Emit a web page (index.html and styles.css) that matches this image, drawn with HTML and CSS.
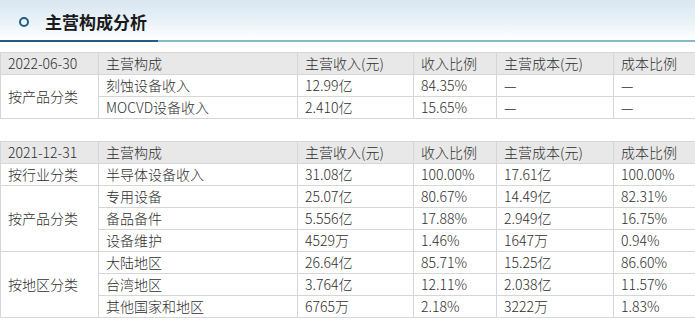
FILE: index.html
```html
<!DOCTYPE html>
<html lang="zh-CN">
<head>
<meta charset="utf-8">
<title>主营构成分析</title>
<link rel="stylesheet" href="styles.css">
</head>
<body>
<div class="page">
  <div class="title-bar">
    <span class="title-dot"></span>
    <h2 class="title">主营构成分析</h2>
  </div>
  <div class="title-line"><span class="line-dark"></span><span class="line-light"></span></div>

  <table class="grid first">
    <colgroup>
      <col class="c1"><col class="c2"><col class="c3"><col class="c4"><col class="c5"><col class="c6">
    </colgroup>
    <tr class="head">
      <td>2022-06-30</td><td>主营构成</td><td>主营收入(元)</td><td>收入比例</td><td>主营成本(元)</td><td>成本比例</td>
    </tr>
    <tr>
      <td rowspan="2">按产品分类</td><td>刻蚀设备收入</td><td>12.99亿</td><td>84.35%</td><td>—</td><td>—</td>
    </tr>
    <tr>
      <td>MOCVD设备收入</td><td>2.410亿</td><td>15.65%</td><td>—</td><td>—</td>
    </tr>
  </table>

  <table class="grid second">
    <colgroup>
      <col class="c1"><col class="c2"><col class="c3"><col class="c4"><col class="c5"><col class="c6">
    </colgroup>
    <tr class="head">
      <td>2021-12-31</td><td>主营构成</td><td>主营收入(元)</td><td>收入比例</td><td>主营成本(元)</td><td>成本比例</td>
    </tr>
    <tr>
      <td>按行业分类</td><td>半导体设备收入</td><td>31.08亿</td><td>100.00%</td><td>17.61亿</td><td>100.00%</td>
    </tr>
    <tr>
      <td rowspan="3">按产品分类</td><td>专用设备</td><td>25.07亿</td><td>80.67%</td><td>14.49亿</td><td>82.31%</td>
    </tr>
    <tr>
      <td>备品备件</td><td>5.556亿</td><td>17.88%</td><td>2.949亿</td><td>16.75%</td>
    </tr>
    <tr>
      <td>设备维护</td><td>4529万</td><td>1.46%</td><td>1647万</td><td>0.94%</td>
    </tr>
    <tr>
      <td rowspan="3">按地区分类</td><td>大陆地区</td><td>26.64亿</td><td>85.71%</td><td>15.25亿</td><td>86.60%</td>
    </tr>
    <tr>
      <td>台湾地区</td><td>3.764亿</td><td>12.11%</td><td>2.038亿</td><td>11.57%</td>
    </tr>
    <tr>
      <td>其他国家和地区</td><td>6765万</td><td>2.18%</td><td>3222万</td><td>1.83%</td>
    </tr>
  </table>
</div>
</body>
</html>
```

FILE: styles.css
```css
html, body {
  margin: 0;
  padding: 0;
  background: #ffffff;
  overflow: hidden;
}

.page {
  width: 695px;
  font-family: "Noto Sans CJK SC", "Liberation Sans", sans-serif;
  color: #333333;
}

.title-bar {
  height: 40px;
  display: flex;
  align-items: center;
  padding-left: 19px;
  box-sizing: border-box;
  background: linear-gradient(to bottom, #d8e6f1 0%, #eaf2f8 55%, #ffffff 100%);
}

.title-dot {
  width: 10px;
  height: 10px;
  border: 2.5px solid #1f5f80;
  border-radius: 50%;
  box-sizing: border-box;
  margin-top: 4px;
}

.title {
  margin: 0 0 0 16px;
  font-size: 17px;
  font-weight: bold;
  color: #1a1a1a;
  line-height: 20px;
  padding-top: 4px;
}

.title-line {
  display: flex;
  height: 2px;
}

.line-dark {
  width: 158px;
  background: #235c86;
}

.line-light {
  flex: 1;
  background: #80bcc7;
}

.grid {
  border-collapse: collapse;
  table-layout: fixed;
  width: 697px;
  font-size: 14px;
}

.grid.first {
  margin-top: 10px;
}

.grid.second {
  margin-top: 22px;
}

.c1 { width: 98px; }
.c2 { width: 199px; }
.c3 { width: 116px; }
.c4 { width: 83px; }
.c5 { width: 117px; }
.c6 { width: 84px; }

.grid td {
  height: 21px;
  padding: 0 0 0 7px;
  border: 1px solid #d6d6d6;
  line-height: 21px;
  white-space: nowrap;
  overflow: hidden;
  vertical-align: middle;
  color: #2e2e2e;
  font-weight: 300;
}

.grid tr.head td {
  background: #e8e8e8;
}
```
